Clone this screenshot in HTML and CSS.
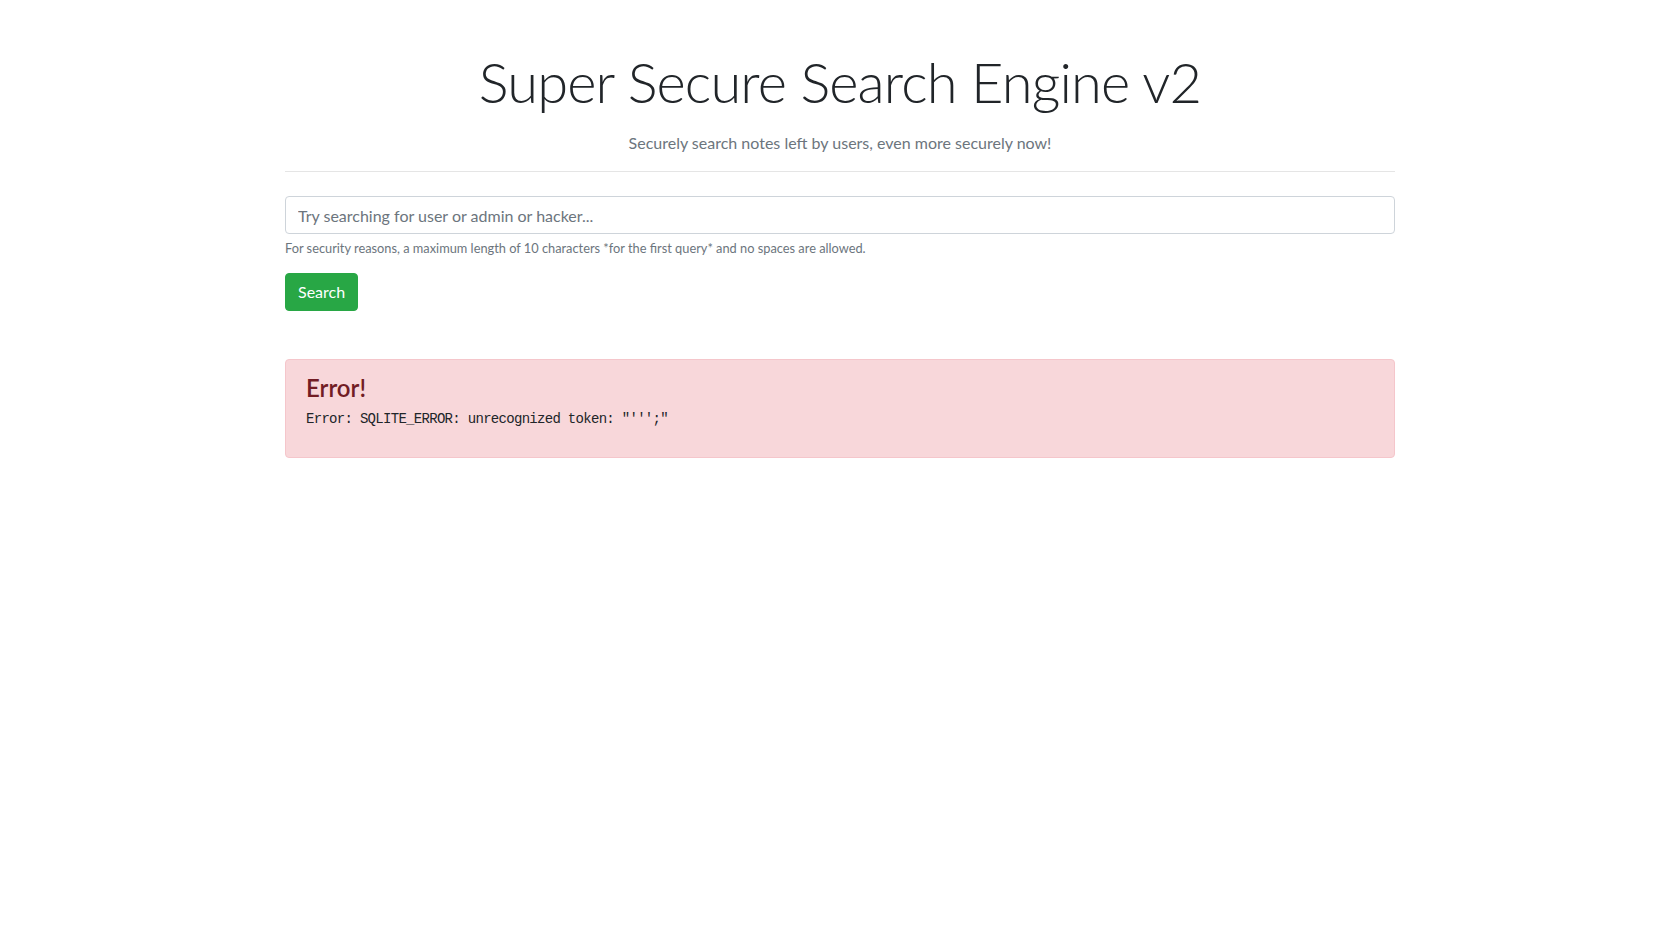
FILE: index.html
```html
<!DOCTYPE html>
<html lang="en">
<head>
<meta charset="utf-8">
<title>Super Secure Search Engine v2</title>
<link rel="stylesheet" href="styles.css">
</head>
<body>
<div class="container">
  <header class="masthead">
    <h1 class="title">Super Secure Search Engine v2</h1>
    <p class="subtitle">Securely search notes left by users, even more securely now!</p>
  </header>
  <hr class="divider">
  <form class="search-form">
    <div class="form-group">
      <input class="form-control" type="text" name="q" placeholder="Try searching for user or admin or hacker...">
      <small class="form-text">For security reasons, a maximum length of 10 characters *for the first query* and no spaces are allowed.</small>
    </div>
    <button class="btn-success" type="button">Search</button>
  </form>
  <div class="alert-danger">
    <h4 class="alert-heading">Error!</h4>
    <pre class="error-text">Error: SQLITE_ERROR: unrecognized token: "''';"</pre>
  </div>
</div>
</body>
</html>
```
FILE: styles.css
```css
* { box-sizing: border-box; }
html, body { margin: 0; background: #fff; }
body {
  font-family: "Lato", "Open Sans", sans-serif;
  font-size: 16px;
  line-height: 1.5;
  color: #212529;
}
.container {
  max-width: 1140px;
  margin: 0 auto;
  padding: 48px 15px 0;
}
.masthead { text-align: center; }
.title {
  margin: 0 0 16px;
  font-size: 56px;
  font-weight: 300;
  line-height: 1.2;
  letter-spacing: -0.85px;
  color: #212529;
}
.subtitle {
  margin: 0;
  font-size: 16px;
  line-height: 24px;
  color: #6c757d;
}
.divider {
  margin: 16px 0 24px;
  border: 0;
  border-top: 1px solid rgba(0, 0, 0, .1);
  height: 0;
}
.search-form { margin: 0; }
.form-group {
  display: flex;
  flex-direction: column;
  margin-bottom: 15px;
}
.form-control {
  display: block;
  width: 100%;
  height: 38px;
  padding: 6px 12px;
  font-family: inherit;
  font-size: 16px;
  line-height: 1.5;
  color: #495057;
  background: #fff;
  border: 1px solid #ced4da;
  border-radius: 4px;
  outline: none;
}
.form-control::placeholder { color: #6c757d; opacity: 1; }
.form-text {
  display: block;
  margin-top: 5px;
  font-size: 12.8px;
  line-height: 19.2px;
  color: #6c757d;
}
.btn-success {
  display: inline-block;
  height: 38px;
  padding: 6px 12px;
  font-family: inherit;
  font-size: 16px;
  line-height: 1.5;
  color: #fff;
  background: #28a745;
  border: 1px solid #28a745;
  border-radius: 4px;
  cursor: pointer;
}
.alert-danger {
  margin-top: 48px;
  padding: 12px 20px;
  color: #721c24;
  background: #f8d7da;
  border: 1px solid #f5c6cb;
  border-radius: 4px;
}
.alert-heading {
  margin: 0 0 5px;
  font-size: 24px;
  font-weight: 600;
  line-height: 32px;
  color: #721c24;
}
.error-text {
  margin: 0 0 15px;
  font-family: "Liberation Mono", "DejaVu Sans Mono", monospace;
  font-size: 14px;
  letter-spacing: -0.7px;
  line-height: 21px;
  color: #212529;
}
```
